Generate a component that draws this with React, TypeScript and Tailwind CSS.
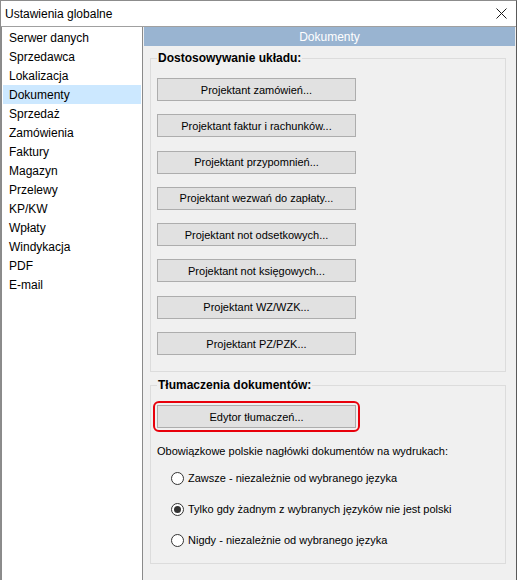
import React from "react";

const font = { fontFamily: '"Liberation Sans", Arial, sans-serif' };

const items = [
  "Serwer danych",
  "Sprzedawca",
  "Lokalizacja",
  "Dokumenty",
  "Sprzedaż",
  "Zamówienia",
  "Faktury",
  "Magazyn",
  "Przelewy",
  "KP/KW",
  "Wpłaty",
  "Windykacja",
  "PDF",
  "E-mail",
];

const buttons = [
  "Projektant zamówień...",
  "Projektant faktur i rachunków...",
  "Projektant przypomnień...",
  "Projektant wezwań do zapłaty...",
  "Projektant not odsetkowych...",
  "Projektant not księgowych...",
  "Projektant WZ/WZK...",
  "Projektant PZ/PZK...",
];

const radios = [
  { label: "Zawsze - niezależnie od wybranego języka", checked: false },
  { label: "Tylko gdy żadnym z wybranych języków nie jest polski", checked: true },
  { label: "Nigdy - niezależnie od wybranego języka", checked: false },
];

function WinButton({ label }: { label: string }) {
  return (
    <div className="w-[199px] h-[23px] bg-[#e1e1e1] border border-[#adadad] flex items-center justify-center text-[11px] leading-[14px] text-black">
      {label}
    </div>
  );
}

function Radio({ checked, label }: { checked: boolean; label: string }) {
  return (
    <div className="flex items-center h-[14px] ml-[20px]">
      <div className="w-[13px] h-[13px] rounded-full border border-[#333333] bg-white flex items-center justify-center shrink-0">
        {checked && <div className="w-[7px] h-[7px] rounded-full bg-[#333333]" />}
      </div>
      <span className="ml-[4px] text-[11px] leading-[14px] text-black">{label}</span>
    </div>
  );
}

export default function App() {
  return (
    <div
      className="w-[517px] h-[580px] overflow-hidden bg-white border-t border-l border-[#8c8c8c] border-r-[#5a5a5a] border-r flex flex-col"
      style={font}
    >
      {/* title bar */}
      <div className="h-[25px] flex items-center justify-between pl-[4px] pr-[9px] shrink-0">
        <span className="text-[12px] leading-[14px] text-black">Ustawienia globalne</span>
        <svg width="11" height="11" viewBox="0 0 11 11">
          <path d="M0.5 0.5 L10.5 10.5 M10.5 0.5 L0.5 10.5" stroke="#1a1a1a" strokeWidth="1" fill="none" />
        </svg>
      </div>

      {/* body */}
      <div className="flex flex-1 border-t border-[#a0a0a0] min-h-0">
        {/* list */}
        <div className="w-[142px] shrink-0 bg-white border-l border-r border-[#8a8a8a] pt-[1px] flex flex-col">
          {items.map((it) => (
            <div
              key={it}
              className={
                "h-[19px] mx-[1px] pl-[6px] flex items-center text-[12px] leading-[14px] text-black " +
                (it === "Dokumenty" ? "bg-[#cce8ff]" : "")
              }
            >
              {it}
            </div>
          ))}
        </div>

        {/* content */}
        <div className="flex-1 bg-[#f0f0f0] flex flex-col">
          <div className="h-[19px] mx-[1px] bg-[#99b4d1] flex items-center justify-center text-white text-[12px] leading-[14px]">
            Dokumenty
          </div>

          <fieldset className="mt-[5px] ml-[7px] mr-[10px] border border-[#dcdcdc] pb-[16px] min-w-0">
            <legend className="ml-[6px] px-[1px] font-bold text-[12px] leading-[14px] text-black">
              Dostosowywanie układu:
            </legend>
            <div className="pt-[13px] ml-[6px] flex flex-col gap-[13.3px]">
              {buttons.map((b) => (
                <WinButton key={b} label={b} />
              ))}
            </div>
          </fieldset>

          <fieldset className="mt-[6px] ml-[7px] mr-[10px] border border-[#dcdcdc] pb-[16px] min-w-0">
            <legend className="ml-[6px] px-[1px] font-bold text-[12px] leading-[14px] text-black">
              Tłumaczenia dokumentów:
            </legend>
            <div className="pt-[9px] ml-[2px] flex flex-col">
              <div className="w-fit border-2 border-[#e8000b] rounded-[6px] p-[2px]">
                <WinButton label="Edytor tłumaczeń..." />
              </div>
              <div className="mt-[12px] ml-[4px] text-[11px] leading-[14px] text-black">
                Obowiązkowe polskie nagłówki dokumentów na wydrukach:
              </div>
              <div className="mt-[13px] flex flex-col gap-[17px] -ml-[2px]">
                {radios.map((r) => (
                  <Radio key={r.label} checked={r.checked} label={r.label} />
                ))}
              </div>
            </div>
          </fieldset>
        </div>
      </div>
    </div>
  );
}
